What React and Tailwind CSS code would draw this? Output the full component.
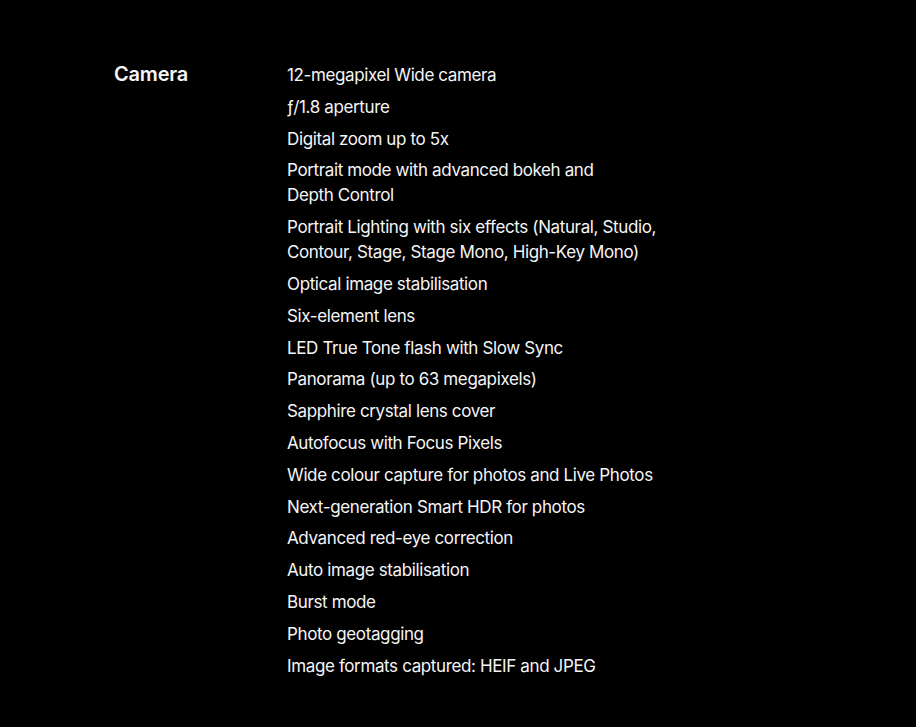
const features = [
  '12-megapixel Wide camera',
  'ƒ/1.8 aperture',
  'Digital zoom up to 5x',
  ['Portrait mode with advanced bokeh and', 'Depth Control'],
  'Portrait Lighting with six effects (Natural, Studio, Contour, Stage, Stage Mono, High-Key Mono)',
  'Optical image stabilisation',
  'Six-element lens',
  'LED True Tone flash with Slow Sync',
  'Panorama (up to 63 megapixels)',
  'Sapphire crystal lens cover',
  'Autofocus with Focus Pixels',
  'Wide colour capture for photos and Live Photos',
  'Next-generation Smart HDR for photos',
  'Advanced red-eye correction',
  'Auto image stabilisation',
  'Burst mode',
  'Photo geotagging',
  'Image formats captured: HEIF and JPEG',
];

const App = () => {
  return (
    <div className="min-h-[727px] bg-black text-[#f5f5f7] font-['Inter','Liberation_Sans',sans-serif]">
      <div className="flex pl-[114px] pt-[63px]">
        <h2 className="w-[173px] -mt-px text-[20px] leading-[25px] font-semibold tracking-[-0.01em]">Camera</h2>
        <ul className="w-[390px] flex flex-col gap-[6.8px] text-[17px] leading-[25px] tracking-[-0.022em]">
          {features.map((f, i) => (
            <li key={i}>
              {Array.isArray(f) ? (
                <>
                  {f[0]}
                  <br />
                  {f[1]}
                </>
              ) : (
                f
              )}
            </li>
          ))}
        </ul>
      </div>
    </div>
  );
};

export default App;
